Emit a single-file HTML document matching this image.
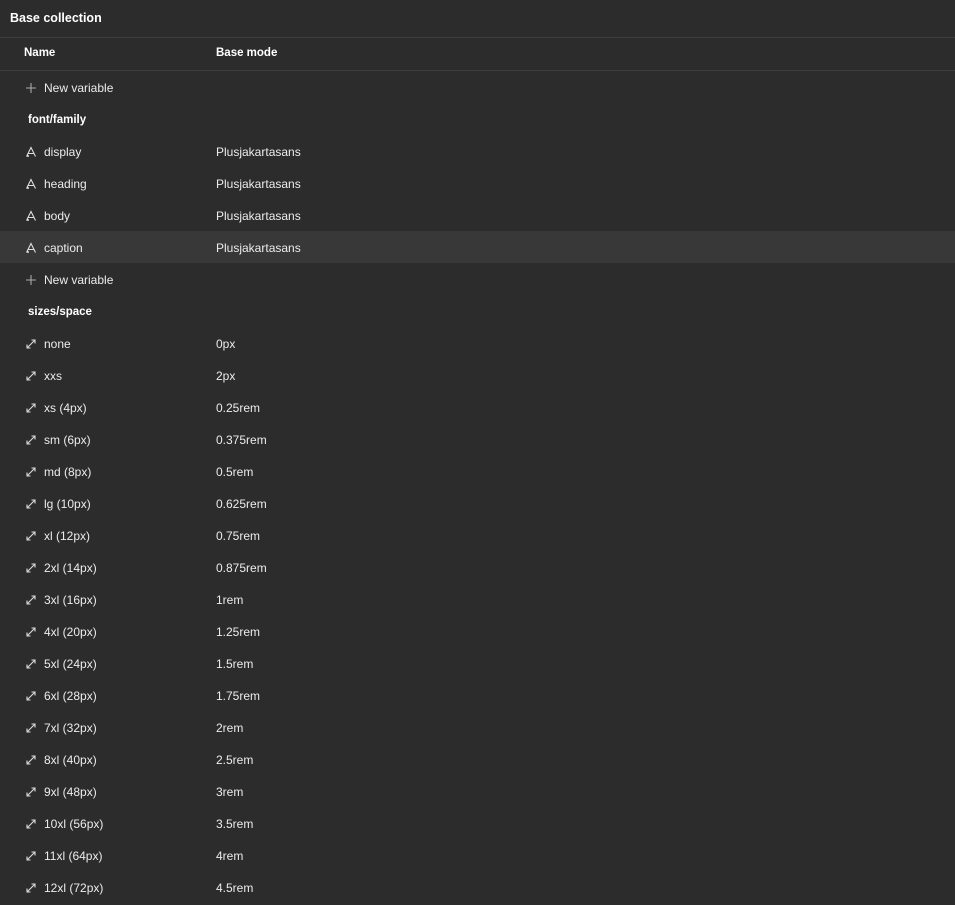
<!DOCTYPE html>
<html><head><style>
body{margin:0;background:#2c2c2c;width:955px;height:905px;overflow:hidden;font-family:"Liberation Sans",sans-serif;font-size:12px;color:#ececec;position:relative}
.t{position:absolute;left:10px;top:11px;font-weight:bold;font-size:12.5px;color:#fff}
.hl{position:absolute;left:0;width:955px;height:1px;background:#3d3d3d}
.h{position:absolute;top:47px;font-weight:bold;color:#fff;font-size:11.5px}
.r{position:absolute;left:0;width:955px;height:32px;line-height:34px}
.r .n{position:absolute;left:44px}
.r .v{position:absolute;left:216px}
.r .g{position:absolute;left:28px;font-weight:bold;color:#fff;font-size:11.5px}
.r svg{position:absolute;left:25px;top:11px}
.sel{background:#383838}
</style></head><body>
<div class="t">Base collection</div>
<div class="hl" style="top:37px"></div>
<div class="h" style="left:24px">Name</div>
<div class="h" style="left:216px">Base mode</div>
<div class="hl" style="top:70px"></div>
<div id="rows"></div>
<script>
var plus='<svg width="12" height="12" viewBox="0 0 12 12"><path d="M6 1v10M1 6h10" stroke="#aaa" stroke-width="1.1"/></svg>';
var font='<svg width="12" height="12" viewBox="0 0 12 12"><path d="M1.5 10.5L6 1.5 10.5 10.5M3.5 7.5h5" stroke="#ddd" stroke-width="1.1" fill="none"/><circle cx="3" cy="10" r="1" fill="#ddd"/></svg>';
var arr='<svg width="12" height="12" viewBox="0 0 12 12"><path d="M2 10L10 2M6.5 2h3.5v3.5M2 6.5v3.5h3.5" stroke="#ddd" stroke-width="1.1" fill="none"/></svg>';
var rows=[['p','New variable'],['g','font/family'],['f','display','Plusjakartasans'],['f','heading','Plusjakartasans'],['f','body','Plusjakartasans'],['f','caption','Plusjakartasans',1],['p','New variable'],['g','sizes/space'],
['a','none','0px'],['a','xxs','2px'],['a','xs (4px)','0.25rem'],['a','sm (6px)','0.375rem'],['a','md (8px)','0.5rem'],['a','lg (10px)','0.625rem'],['a','xl (12px)','0.75rem'],['a','2xl (14px)','0.875rem'],['a','3xl (16px)','1rem'],['a','4xl (20px)','1.25rem'],['a','5xl (24px)','1.5rem'],['a','6xl (28px)','1.75rem'],['a','7xl (32px)','2rem'],['a','8xl (40px)','2.5rem'],['a','9xl (48px)','3rem'],['a','10xl (56px)','3.5rem'],['a','11xl (64px)','4rem'],['a','12xl (72px)','4.5rem']];
var h='';rows.forEach(function(r,i){var top=71+32*i;h+='<div class="r'+(r[3]?' sel':'')+'" style="top:'+top+'px">';
if(r[0]=='g')h+='<span class="g">'+r[1]+'</span>';else{h+=(r[0]=='p'?plus:r[0]=='f'?font:arr)+'<span class="n">'+r[1]+'</span>';if(r[2])h+='<span class="v">'+r[2]+'</span>';}
h+='</div>';});document.getElementById('rows').innerHTML=h;
</script>
</body></html>
